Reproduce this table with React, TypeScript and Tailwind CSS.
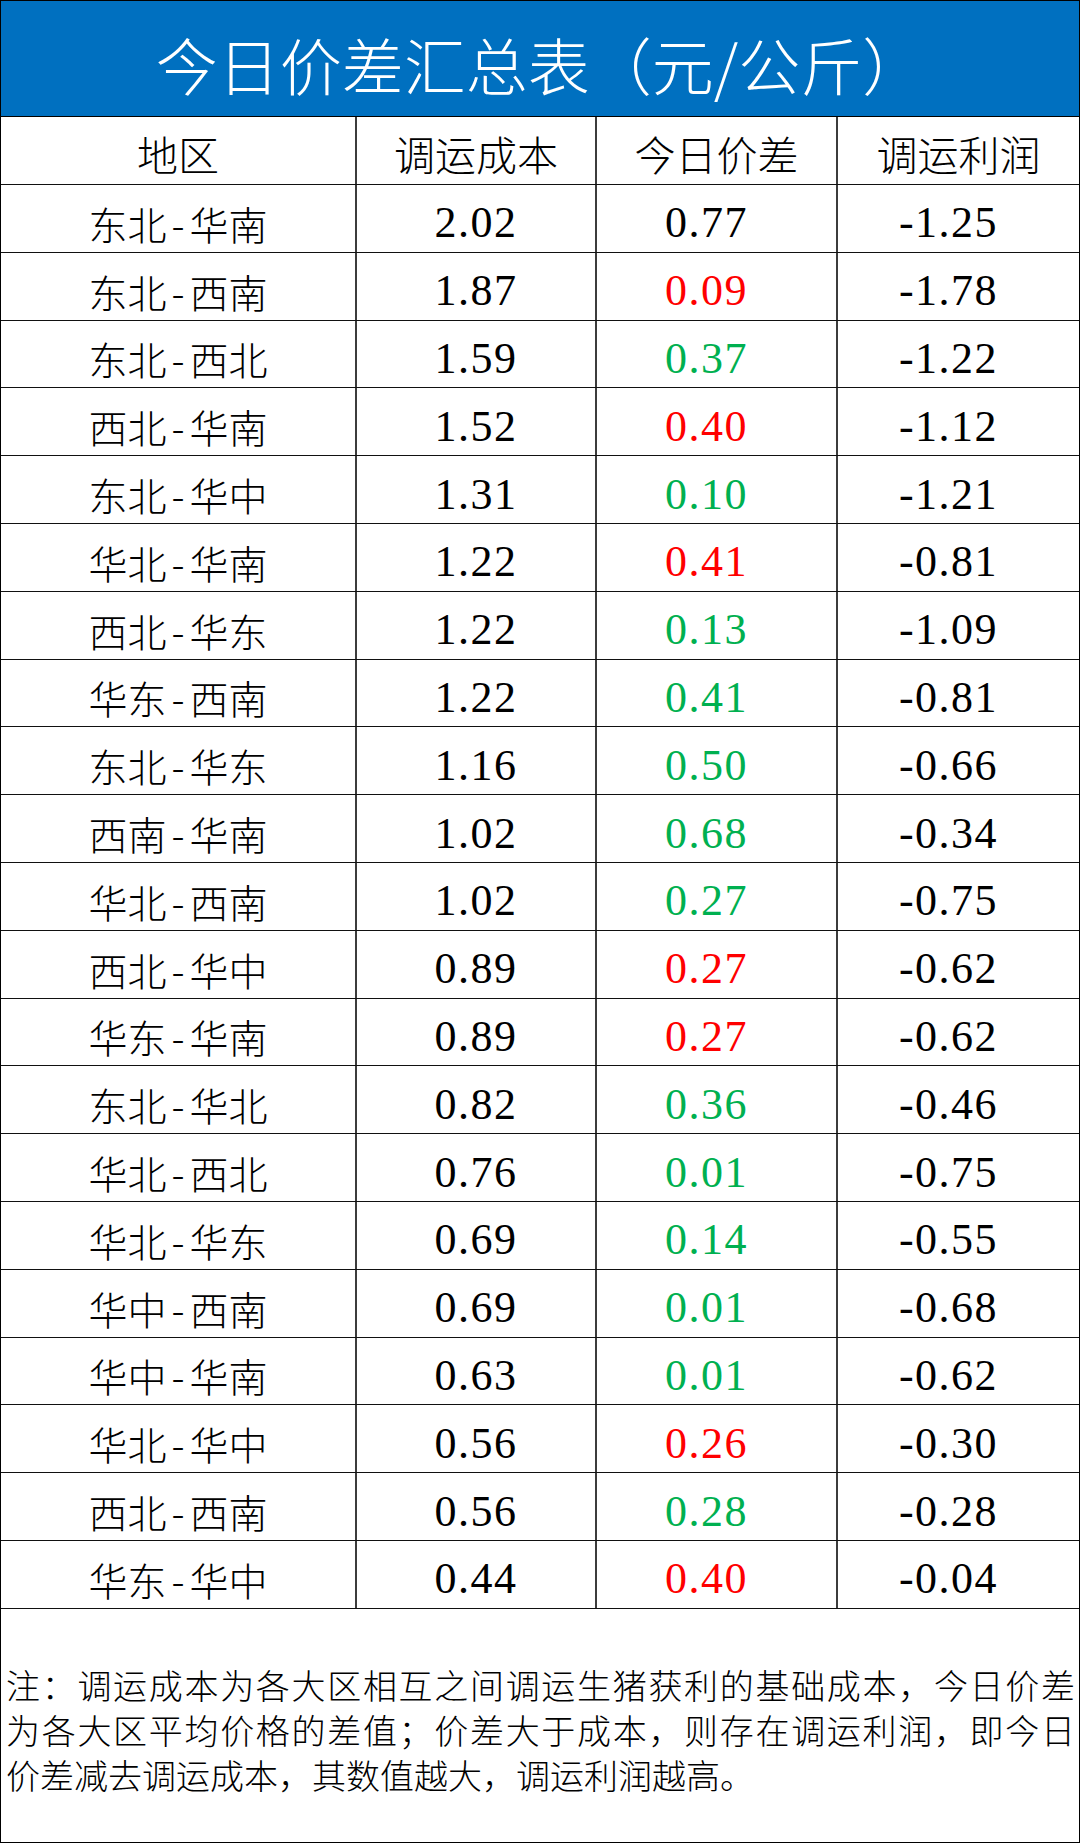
type Tone = 'black' | 'red' | 'green';

interface Row {
  route: [string, string];
  cost: string;
  spread: string;
  tone: Tone;
  profit: string;
}

const rows: Row[] = [
  { route: ['东北', '华南'], cost: '2.02', spread: '0.77', tone: 'black', profit: '-1.25' },
  { route: ['东北', '西南'], cost: '1.87', spread: '0.09', tone: 'red', profit: '-1.78' },
  { route: ['东北', '西北'], cost: '1.59', spread: '0.37', tone: 'green', profit: '-1.22' },
  { route: ['西北', '华南'], cost: '1.52', spread: '0.40', tone: 'red', profit: '-1.12' },
  { route: ['东北', '华中'], cost: '1.31', spread: '0.10', tone: 'green', profit: '-1.21' },
  { route: ['华北', '华南'], cost: '1.22', spread: '0.41', tone: 'red', profit: '-0.81' },
  { route: ['西北', '华东'], cost: '1.22', spread: '0.13', tone: 'green', profit: '-1.09' },
  { route: ['华东', '西南'], cost: '1.22', spread: '0.41', tone: 'green', profit: '-0.81' },
  { route: ['东北', '华东'], cost: '1.16', spread: '0.50', tone: 'green', profit: '-0.66' },
  { route: ['西南', '华南'], cost: '1.02', spread: '0.68', tone: 'green', profit: '-0.34' },
  { route: ['华北', '西南'], cost: '1.02', spread: '0.27', tone: 'green', profit: '-0.75' },
  { route: ['西北', '华中'], cost: '0.89', spread: '0.27', tone: 'red', profit: '-0.62' },
  { route: ['华东', '华南'], cost: '0.89', spread: '0.27', tone: 'red', profit: '-0.62' },
  { route: ['东北', '华北'], cost: '0.82', spread: '0.36', tone: 'green', profit: '-0.46' },
  { route: ['华北', '西北'], cost: '0.76', spread: '0.01', tone: 'green', profit: '-0.75' },
  { route: ['华北', '华东'], cost: '0.69', spread: '0.14', tone: 'green', profit: '-0.55' },
  { route: ['华中', '西南'], cost: '0.69', spread: '0.01', tone: 'green', profit: '-0.68' },
  { route: ['华中', '华南'], cost: '0.63', spread: '0.01', tone: 'green', profit: '-0.62' },
  { route: ['华北', '华中'], cost: '0.56', spread: '0.26', tone: 'red', profit: '-0.30' },
  { route: ['西北', '西南'], cost: '0.56', spread: '0.28', tone: 'green', profit: '-0.28' },
  { route: ['华东', '华中'], cost: '0.44', spread: '0.40', tone: 'red', profit: '-0.04' },
];

const toneClass: Record<Tone, string> = {
  black: 'text-black',
  red: 'text-[#ff0000]',
  green: 'text-[#00b050]',
};

const cjk = "font-['Noto_Sans_CJK_SC',sans-serif] font-light";
const num = "font-['Liberation_Serif','DejaVu_Serif',serif] tracking-[1.5px]";
const grid = 'grid grid-cols-[356px_240px_241px_1fr]';
const vline = 'border-r-2 border-[#3c3c3c]';

export default function App() {
  return (
    <div className="w-[1080px] h-[1844px] bg-white">
      <div className="w-[1080px] h-[1843px] border border-black flex flex-col">
        {/* title bar */}
        <div
          className={`h-[116px] shrink-0 bg-[#0070c0] border-b border-black flex items-center justify-center pt-[11px] text-white text-[62px] leading-none ${cjk}`}>
          今日价差汇总表（元/公斤）
        </div>

        {/* column heads */}
        <div className={`${grid} h-[68px] shrink-0 border-b border-[#111] text-[41px] leading-none text-black ${cjk}`}>
          {['地区', '调运成本', '今日价差', '调运利润'].map((h, i) => (
            <div key={h} className={`flex items-center justify-center pt-[5px] ${i < 3 ? vline : ''}`}>
              {h}
            </div>
          ))}
        </div>

        {/* data rows */}
        {rows.map((r, idx) => (
          <div key={idx} className={`${grid} h-[67.8px] shrink-0 border-b border-[#111] leading-none`}>
            <div className={`flex items-center justify-center pt-[10px] text-[39px] text-black ${cjk} ${vline}`}>
              {r.route[0]}
              <span className="px-[5px]">-</span>
              {r.route[1]}
            </div>
            <div className={`flex items-center justify-center pt-[10px] text-[44px] text-black ${num} ${vline}`}>
              {r.cost}
            </div>
            <div className={`flex items-center justify-center pt-[10px] pr-[20px] text-[44px] ${toneClass[r.tone]} ${num} ${vline}`}>
              {r.spread}
            </div>
            <div className={`flex items-center justify-center pt-[10px] pr-[20px] text-[44px] text-black ${num}`}>
              {r.profit}
            </div>
          </div>
        ))}

        {/* footnote */}
        <div className={`flex-1 flex flex-col justify-center pt-[9px] pl-[5px] pr-[4px] text-[34px] leading-[45px] text-black ${cjk}`}>
          <p className="text-justify [text-align-last:justify]">注：调运成本为各大区相互之间调运生猪获利的基础成本，今日价差</p>
          <p className="text-justify [text-align-last:justify]">为各大区平均价格的差值；价差大于成本，则存在调运利润，即今日</p>
          <p>价差减去调运成本，其数值越大，调运利润越高。</p>
        </div>
      </div>
    </div>
  );
}
